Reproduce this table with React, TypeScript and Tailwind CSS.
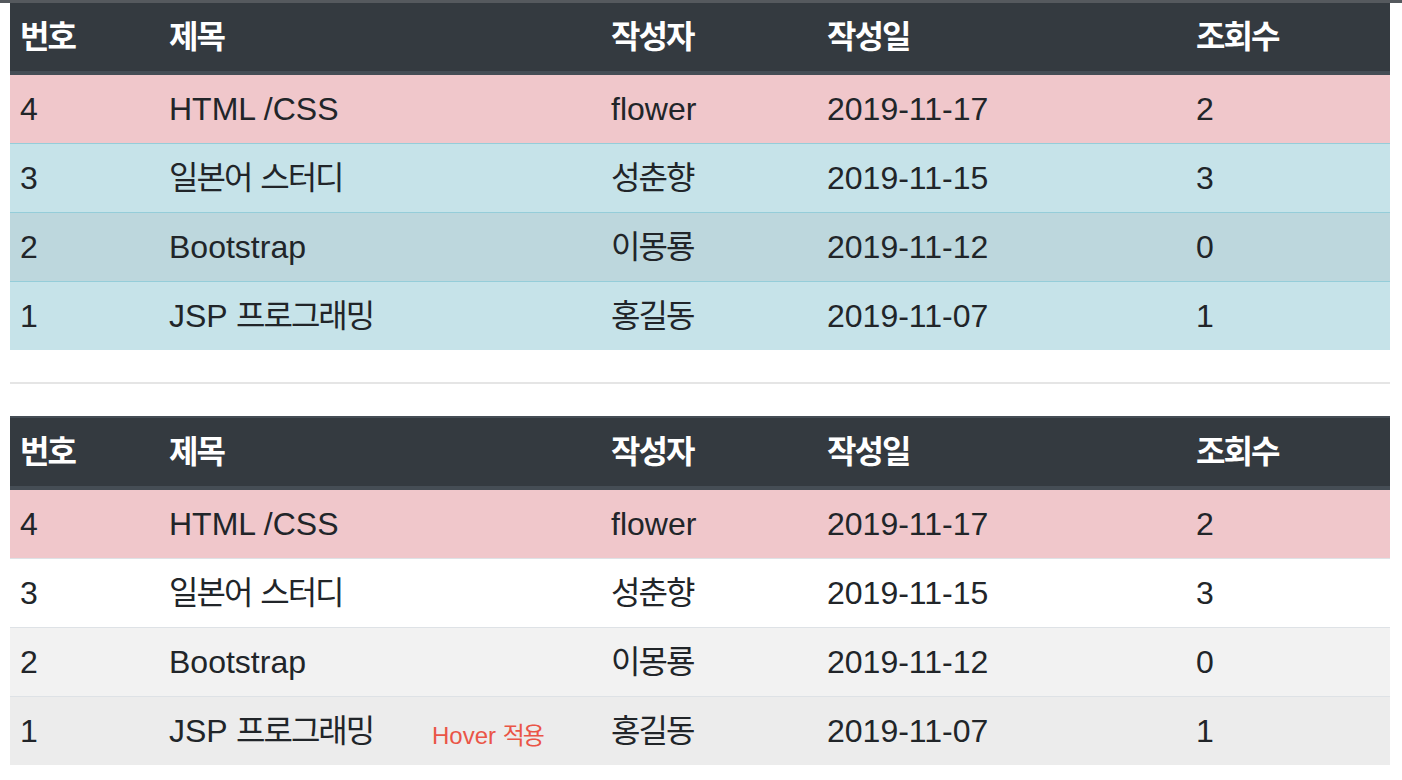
const rows = [
  { no: '4', title: 'HTML /CSS', writer: 'flower', date: '2019-11-17', hit: '2' },
  { no: '3', title: '일본어 스터디', writer: '성춘향', date: '2019-11-15', hit: '3' },
  { no: '2', title: 'Bootstrap', writer: '이몽룡', date: '2019-11-12', hit: '0' },
  { no: '1', title: 'JSP 프로그래밍', writer: '홍길동', date: '2019-11-07', hit: '1' },
];

function Txt({ text }: { text: string }) {
  const parts = text.split(/([\uac00-\ud7a3]+)/);
  return (
    <>
      {parts.map((p, i) =>
        /[\uac00-\ud7a3]/.test(p) ? (
          <span key={i} className="tracking-[-2px]">
            {p}
          </span>
        ) : (
          <span key={i}>{p}</span>
        ),
      )}
    </>
  );
}

function Head({ top }: { top: boolean }) {
  const th = `text-left font-bold text-white bg-[#343a40] border-b-4 border-[#454d55] px-[10px] pt-3 pb-3 leading-[44px] ${
    top ? 'border-t-2' : ''
  }`;
  return (
    <thead>
      <tr>
        {['번호', '제목', '작성자', '작성일', '조회수'].map((h) => (
          <th key={h} className={th}>
            <span className="tracking-[-2px]">{h}</span>
          </th>
        ))}
      </tr>
    </thead>
  );
}

function Cols() {
  return (
    <colgroup>
      <col className="w-[149px]" />
      <col className="w-[442px]" />
      <col className="w-[216px]" />
      <col className="w-[369px]" />
      <col className="w-[204px]" />
    </colgroup>
  );
}

const td = 'px-[10px] py-3 leading-[44px]';

export default function App() {
  const firstBg = ['bg-[#f0c7cb]', 'bg-[#c6e3e9]', 'bg-[#bdd7dd]', 'bg-[#c6e3e9]'];
  const firstBorder = ['', 'border-t border-[#95cdd9]', 'border-t border-[#95cdd9]', 'border-t border-[#95cdd9]'];
  const secondBg = ['bg-[#f0c7cb]', 'bg-white', 'bg-[#f2f2f2]', 'bg-[#ececec]'];

  return (
    <div
      className="min-h-screen bg-white text-[#212529] text-[32px]"
      style={{ fontFamily: '"Liberation Sans", "Noto Sans CJK KR", sans-serif' }}
    >
      <div className="h-[3px] w-full bg-[#55595e]" />
      <div className="w-[1380px] ml-[10px]">
        <table className="w-full table-fixed border-collapse">
          <Cols />
          <Head top={false} />
          <tbody>
            {rows.map((r, i) => (
              <tr key={r.no} className={`${firstBg[i]} ${firstBorder[i]}`}>
                <td className={td}>{r.no}</td>
                <td className={td}>
                  <Txt text={r.title} />
                </td>
                <td className={td}>
                  <Txt text={r.writer} />
                </td>
                <td className={td}>{r.date}</td>
                <td className={td}>{r.hit}</td>
              </tr>
            ))}
          </tbody>
        </table>

        <hr className="my-8 border-0 h-[2px] bg-[#e5e5e5]" />

        <table className="w-full table-fixed border-collapse">
          <Cols />
          <Head top={true} />
          <tbody>
            {rows.map((r, i) => (
              <tr key={r.no} className={`${secondBg[i]} ${i > 0 ? 'border-t border-[#dee2e6]' : ''}`}>
                <td className={td}>{r.no}</td>
                <td className={`${td} relative`}>
                  <Txt text={r.title} />
                  {i === 3 && (
                    <span className="absolute left-[273px] top-[24px] text-[24px] leading-[30px] text-[#ea5547]">
                      Hover <span className="tracking-[-2px]">적용</span>
                    </span>
                  )}
                </td>
                <td className={td}>
                  <Txt text={r.writer} />
                </td>
                <td className={td}>{r.date}</td>
                <td className={td}>{r.hit}</td>
              </tr>
            ))}
          </tbody>
        </table>
      </div>
    </div>
  );
}
